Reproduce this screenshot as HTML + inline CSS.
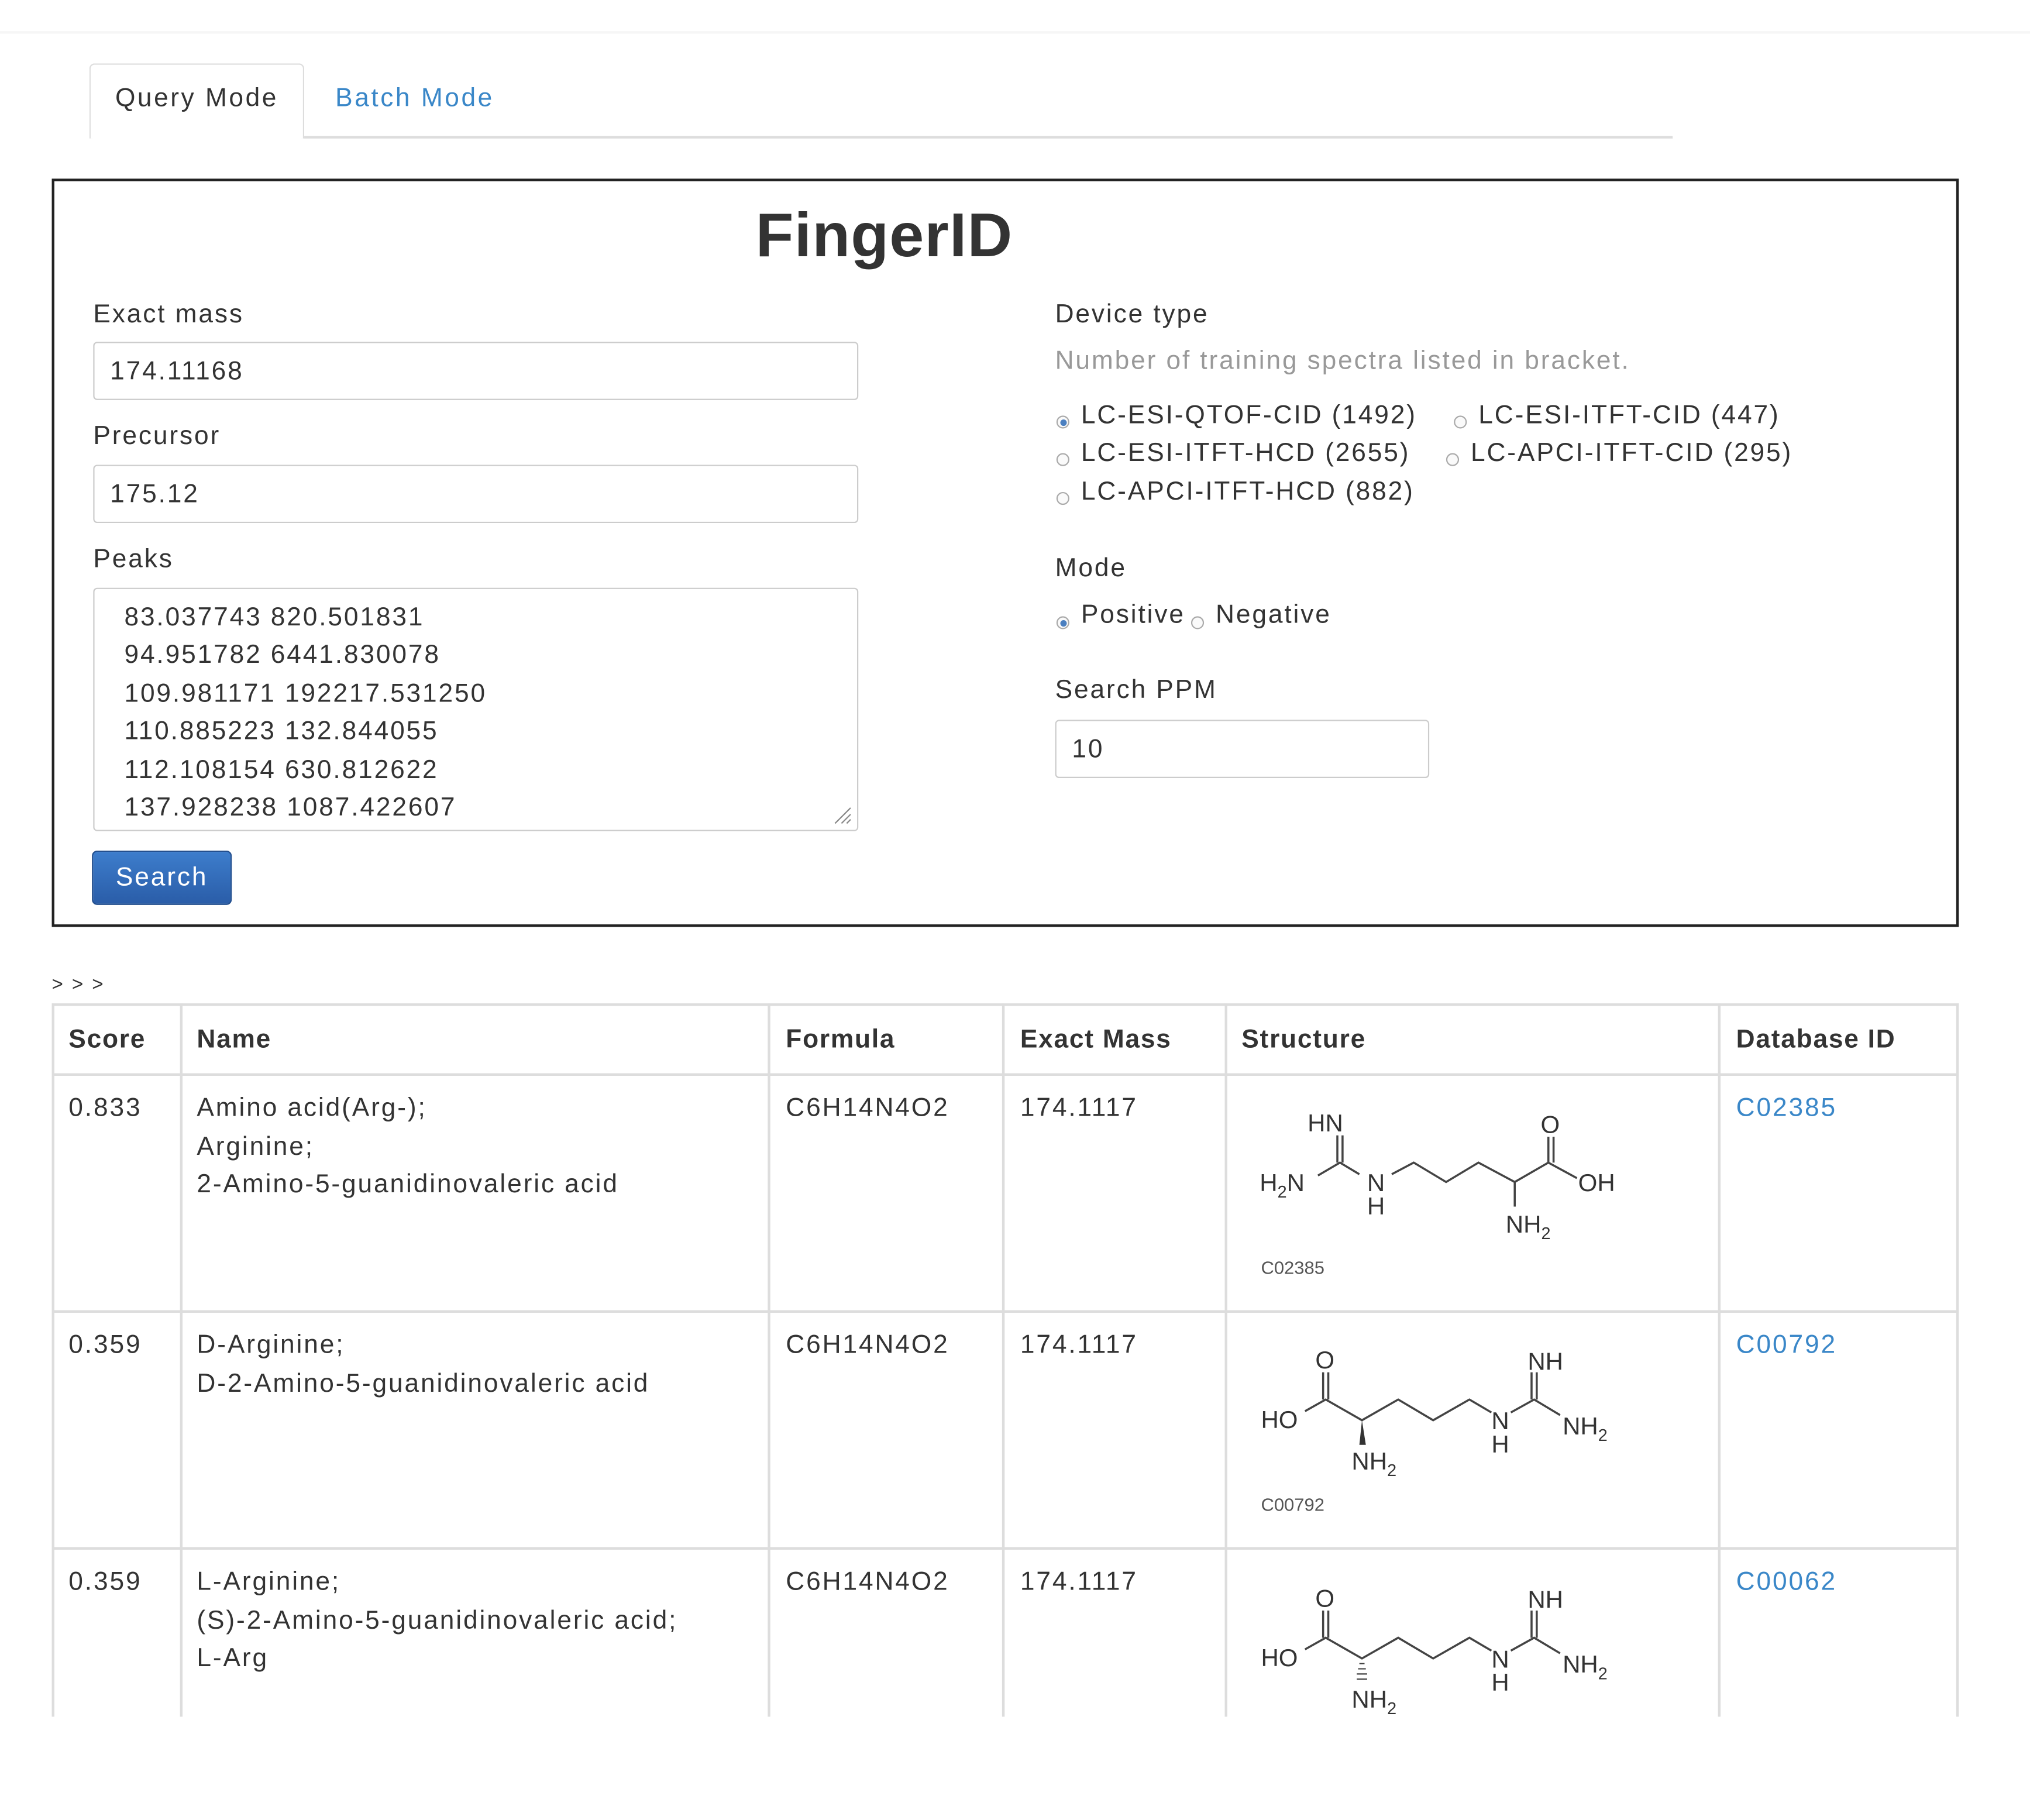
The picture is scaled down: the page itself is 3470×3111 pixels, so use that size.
<!DOCTYPE html>
<html><head><meta charset="utf-8"><style>
html,body{margin:0;padding:0;background:#fff;}
body{width:3470px;height:3110px;overflow:hidden;position:relative;}
#w{position:absolute;left:0;top:0;width:1568px;height:1406px;transform:scale(2.213);transform-origin:0 0;font-family:"Liberation Sans",Arial,sans-serif;color:#333;font-size:20px;letter-spacing:1.3px;}
.a{position:absolute;white-space:nowrap;}
.inp{position:absolute;border:1.5px solid #ccc;border-radius:3px;box-sizing:border-box;background:#fff;}
.r{position:absolute;width:10px;height:10px;border:1px solid #aaa;border-radius:50%;box-sizing:border-box;background:#fafafa;}
.r.on::after{content:"";position:absolute;left:2px;top:2px;width:5px;height:5px;border-radius:50%;background:#4a7fc0;}
.vl{position:absolute;width:1.5px;background:#ddd;}
.hl{position:absolute;height:1.5px;background:#ddd;}
a{color:#3a87c8;text-decoration:none;}
svg text{letter-spacing:0;}
</style></head><body><div id="w">
<div class="hl" style="left:0;top:24px;width:1568px;background:#f6f6f6"></div>
<div style="position:absolute;left:69px;top:49px;width:166px;height:58px;border:1.5px solid #ddd;border-bottom:none;border-radius:4px 4px 0 0;box-sizing:border-box;background:#fff"></div>
<div class="hl" style="left:235px;top:105px;width:1057px"></div>
<div class="a" style="left:89px;top:65px;letter-spacing:1.6px">Query Mode</div>
<div class="a" style="left:259px;top:65px;color:#3a87c8;letter-spacing:1.6px">Batch Mode</div>
<div style="position:absolute;left:40px;top:138px;width:1473px;height:578px;border:2px solid #222;box-sizing:border-box"></div>
<div class="a" style="left:0;width:1366px;text-align:center;top:155px;font-size:48px;font-weight:bold;color:#333;letter-spacing:0.5px">FingerID</div>
<div class="a" style="left:72px;top:232px">Exact mass</div>
<div class="inp" style="left:72px;top:264px;width:591px;height:45px"></div>
<div class="a" style="left:85px;top:276px">174.11168</div>
<div class="a" style="left:72px;top:326px">Precursor</div>
<div class="inp" style="left:72px;top:359px;width:591px;height:45px"></div>
<div class="a" style="left:85px;top:371px">175.12</div>
<div class="a" style="left:72px;top:421px">Peaks</div>
<div class="inp" style="left:72px;top:454px;width:591px;height:188px"></div>
<div class="a" style="left:96px;top:463px;line-height:29.4px">83.037743 820.501831<br>94.951782 6441.830078<br>109.981171 192217.531250<br>110.885223 132.844055<br>112.108154 630.812622<br>137.928238 1087.422607</div>
<svg class="a" style="left:643px;top:622px" width="16" height="16"><path d="M2 14L14 2M7 14L14 7M11 14L14 11" stroke="#888" stroke-width="1"/></svg>
<div style="position:absolute;left:71px;top:657px;width:108px;height:42px;border-radius:4px;background:linear-gradient(#3d7dcc,#2a5da8);border:1px solid #24508f;box-sizing:border-box;color:#fff;text-align:center;line-height:40px">Search</div>
<div class="a" style="left:815px;top:232px">Device type</div>
<div class="a" style="left:815px;top:268px;color:#999">Number of training spectra listed in bracket.</div>
<div class="r on" style="left:816px;top:321px"></div><div class="a" style="left:835px;top:310px">LC-ESI-QTOF-CID (1492)</div>
<div class="r" style="left:1123px;top:321px"></div><div class="a" style="left:1142px;top:310px">LC-ESI-ITFT-CID (447)</div>
<div class="r" style="left:816px;top:350px"></div><div class="a" style="left:835px;top:339px">LC-ESI-ITFT-HCD (2655)</div>
<div class="r" style="left:1117px;top:350px"></div><div class="a" style="left:1136px;top:339px">LC-APCI-ITFT-CID (295)</div>
<div class="r" style="left:816px;top:380px"></div><div class="a" style="left:835px;top:369px">LC-APCI-ITFT-HCD (882)</div>
<div class="a" style="left:815px;top:428px">Mode</div>
<div class="r on" style="left:816px;top:476px"></div><div class="a" style="left:835px;top:464px">Positive</div>
<div class="r" style="left:920px;top:476px"></div><div class="a" style="left:939px;top:464px">Negative</div>
<div class="a" style="left:815px;top:522px">Search PPM</div>
<div class="inp" style="left:815px;top:556px;width:289px;height:45px"></div>
<div class="a" style="left:828px;top:568px">10</div>
<div class="a" style="left:40px;top:752px;font-size:15px">&gt; &gt; &gt;</div>
<div class="hl" style="left:40px;top:775px;width:1473px"></div>
<div class="hl" style="left:40px;top:829px;width:1473px"></div>
<div class="hl" style="left:40px;top:1012px;width:1473px"></div>
<div class="hl" style="left:40px;top:1195px;width:1473px"></div>
<div class="vl" style="left:40px;top:775px;height:551px"></div>
<div class="vl" style="left:139px;top:775px;height:551px"></div>
<div class="vl" style="left:593px;top:775px;height:551px"></div>
<div class="vl" style="left:774px;top:775px;height:551px"></div>
<div class="vl" style="left:946px;top:775px;height:551px"></div>
<div class="vl" style="left:1327px;top:775px;height:551px"></div>
<div class="vl" style="left:1511px;top:775px;height:551px"></div>
<div style="font-weight:bold;letter-spacing:0.8px">
<div class="a" style="left:53px;top:792px">Score</div>
<div class="a" style="left:152px;top:792px">Name</div>
<div class="a" style="left:607px;top:792px">Formula</div>
<div class="a" style="left:788px;top:792px">Exact Mass</div>
<div class="a" style="left:959px;top:792px">Structure</div>
<div class="a" style="left:1341px;top:792px">Database ID</div>
</div>
<div style="line-height:29.5px">
<div class="a" style="left:53px;top:842px">0.833</div>
<div class="a" style="left:152px;top:842px">Amino acid(Arg-);<br>Arginine;<br>2-Amino-5-guanidinovaleric acid</div>
<div class="a" style="left:607px;top:842px">C6H14N4O2</div>
<div class="a" style="left:788px;top:842px">174.1117</div>
<div class="a" style="left:1341px;top:842px"><a>C02385</a></div>
<div class="a" style="left:53px;top:1025px">0.359</div>
<div class="a" style="left:152px;top:1025px">D-Arginine;<br>D-2-Amino-5-guanidinovaleric acid</div>
<div class="a" style="left:607px;top:1025px">C6H14N4O2</div>
<div class="a" style="left:788px;top:1025px">174.1117</div>
<div class="a" style="left:1341px;top:1025px"><a>C00792</a></div>
<div class="a" style="left:53px;top:1208px">0.359</div>
<div class="a" style="left:152px;top:1208px">L-Arginine;<br>(S)-2-Amino-5-guanidinovaleric acid;<br>L-Arg</div>
<div class="a" style="left:607px;top:1208px">C6H14N4O2</div>
<div class="a" style="left:788px;top:1208px">174.1117</div>
<div class="a" style="left:1341px;top:1208px"><a>C00062</a></div>
</div>
<svg class="a" style="left:0;top:0" width="1550" height="1330" font-family="Liberation Sans,Arial,sans-serif" font-size="19" fill="#333">
<g stroke="#444" stroke-width="1.6" fill="none">
<path d="M1018 908L1035 898L1050 907M1033 877V898M1037 877V898M1075 907L1092 898L1117 913L1142 898L1170 913L1196 898M1196 878V898M1200 878V898M1196 898L1218 910M1170 913V932"/>
</g>
<text x="1010" y="874">HN</text>
<text x="973" y="920">H<tspan font-size="13" dy="5">2</tspan><tspan dy="-5">N</tspan></text>
<text x="1056" y="920">N</text><text x="1056" y="938">H</text>
<text x="1190" y="875">O</text>
<text x="1219" y="920">OH</text>
<text x="1163" y="952">NH<tspan font-size="13" dy="5">2</tspan></text>
<text x="974" y="984" font-size="14" fill="#555">C02385</text>
<g>
<g stroke="#444" stroke-width="1.6" fill="none">
<path d="M1008 1090L1024 1081L1052 1097L1080 1081L1107 1097L1135 1081L1152 1091M1167 1091L1185 1081L1205 1093M1022 1060V1081M1026 1060V1081M1183 1060V1081M1187 1060V1081"/>
</g>
<polygon points="1052,1097 1050,1116 1055,1116" fill="#333"/>
<text x="1016" y="1057">O</text>
<text x="974" y="1103">HO</text>
<text x="1044" y="1135">NH<tspan font-size="13" dy="5">2</tspan></text>
<text x="1152" y="1104">N</text><text x="1152" y="1122">H</text>
<text x="1180" y="1058">NH</text>
<text x="1207" y="1108">NH<tspan font-size="13" dy="5">2</tspan></text>
</g>
<text x="974" y="1167" font-size="14" fill="#555">C00792</text>
<g transform="translate(0,184)">
<g stroke="#444" stroke-width="1.6" fill="none">
<path d="M1008 1090L1024 1081L1052 1097L1080 1081L1107 1097L1135 1081L1152 1091M1167 1091L1185 1081L1205 1093M1022 1060V1081M1026 1060V1081M1183 1060V1081M1187 1060V1081"/>
<path d="M1050 1101H1054M1049 1105H1055M1048 1109H1056M1048 1113H1056" stroke-width="1"/>
</g>
<text x="1016" y="1057">O</text>
<text x="974" y="1103">HO</text>
<text x="1044" y="1135">NH<tspan font-size="13" dy="5">2</tspan></text>
<text x="1152" y="1104">N</text><text x="1152" y="1122">H</text>
<text x="1180" y="1058">NH</text>
<text x="1207" y="1108">NH<tspan font-size="13" dy="5">2</tspan></text>
</g>
</svg>
</div></body></html>
